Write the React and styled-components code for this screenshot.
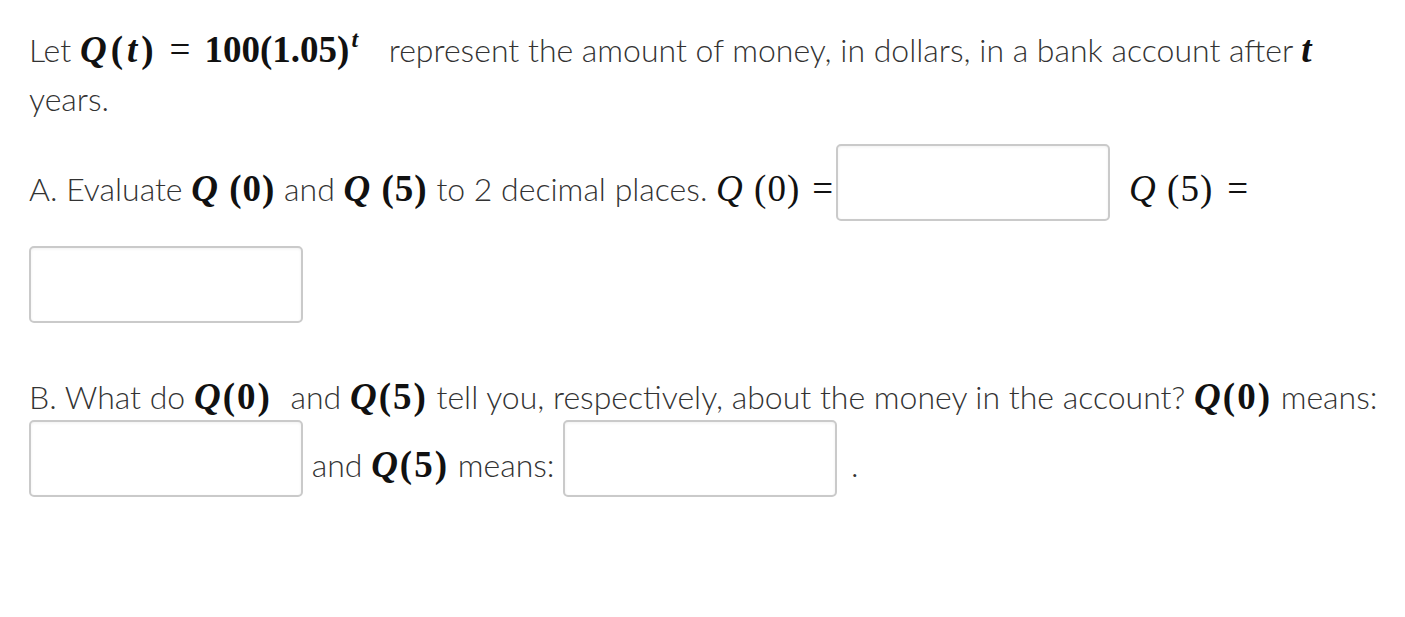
import styled, { createGlobalStyle } from "styled-components";

const Global = createGlobalStyle`
  body {
    margin: 0;
    background: #fff;
  }
`;

const Page = styled.div`
  padding: 25px 20px 40px 29px;
  max-width: 1360px;
  font-family: "Lato Light", Lato, "Open Sans", sans-serif;
  font-weight: 300;
  font-size: 32px;
  color: #333;
`;

const Intro = styled.p`
  margin: 0;
  line-height: 49px;
`;

const Part = styled.p`
  margin: ${(p) => p.$top}px 0 0;
  line-height: 40px;
`;

const Math = styled.span`
  font-family: "Liberation Serif", "DejaVu Serif", serif;
  font-size: ${(p) => p.$size ?? 37}px;
  line-height: 1;
  letter-spacing: ${(p) => p.$ls ?? 1}px;
  font-weight: ${(p) => (p.$bold ? 700 : 400)};
  color: #111;
  white-space: nowrap;
`;

const Plain = styled.span`
  letter-spacing: 0;
`;

const V = styled.i`
  font-style: italic;
`;

const Sup = styled.sup`
  font-size: 24px;
  font-style: italic;
  vertical-align: 15px;
  line-height: 0;
  margin-left: 2px;
`;

const Gap = styled.span`
  display: inline-block;
  width: ${(p) => p.$w}px;
`;

const Eq = styled.span`
  font-weight: 400;
  margin: 0 ${(p) => p.$r ?? p.$m ?? 10}px 0 ${(p) => p.$m ?? 10}px;
`;

const Field = styled.span`
  display: inline-block;
  overflow: hidden;
  vertical-align: -42px;
  margin: 3px ${(p) => p.$right ?? 0}px 22px ${(p) => p.$left ?? 0}px;
`;

const Box = styled.input`
  display: block;
  box-sizing: border-box;
  width: 274px;
  height: 77px;
  margin: 0;
  border: 2px solid #cacaca;
  border-radius: 5px;
  box-shadow: inset 0 1px 3px rgba(0, 0, 0, 0.06);
  background: #fff;
  font: inherit;
  padding: 0 10px;
  outline: none;
`;

const Input = (props) => (
  <Field {...props}>
    <Box type="text" />
  </Field>
);

export default function App() {
  return (
    <>
      <Global />
      <Page>
        <Intro>
          Let{" "}
          <Math $bold $ls={4}>
            <V>Q</V>(<V>t</V>)<Eq $m={12} $r={10}>=</Eq>
            <Plain>100(1.05)</Plain>
            <Sup>t</Sup>
          </Math>
          <Gap $w={18} /> represent the amount of money, in dollars, in a bank
          account after{" "}
          <Math $bold>
            <V>t</V>
          </Math>{" "}
          years.
        </Intro>

        <Part $top={18}>
          A. Evaluate{" "}
          <Math $bold>
            <V>Q</V> (0)
          </Math>{" "}
          and{" "}
          <Math $bold>
            <V>Q</V> (5)
          </Math>{" "}
          to 2 decimal places.{" "}
          <Math>
            <V>Q</V> (0)<Eq $m={12} $r={0}>=</Eq>
          </Math>
          <Input $left={2} $right={19} />
          <Math>
            <V>Q</V> (5)<Eq $m={14}>=</Eq>
          </Math>{" "}
          <Input />
        </Part>

        <Part $top={32}>
          B. What do{" "}
          <Math $bold $ls={2}>
            <V>Q</V>(0)
          </Math>
          <Gap $w={10} /> and{" "}
          <Math $bold $ls={2}>
            <V>Q</V>(5)
          </Math>{" "}
          tell you, respectively, about the money in the account?{" "}
          <Math $bold $ls={2}>
            <V>Q</V>(0)
          </Math>{" "}
          means: <Input /> and{" "}
          <Math $bold $ls={2}>
            <V>Q</V>(5)
          </Math>{" "}
          means: <Input $right={5} /> .
        </Part>
      </Page>
    </>
  );
}
